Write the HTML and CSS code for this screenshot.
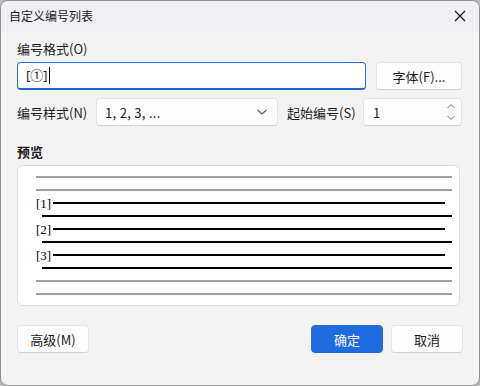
FILE: index.html
```html
<!DOCTYPE html>
<html lang="zh">
<head>
    <meta charset="UTF-8">
    <meta name="viewport" content="width=device-width, initial-scale=1.0">
    <title>自定义编号列表</title>
    <link rel="stylesheet" href="styles.css">
</head>
<body>
    <div class="window">
        <div class="titlebar">
            <span class="title">自定义编号列表</span>
            <span class="close">
                <svg width="12" height="12" viewBox="0 0 12 12"><path d="M1 1 L11 11 M11 1 L1 11" stroke="#1a1a1a" stroke-width="1.2" fill="none"/></svg>
            </span>
        </div>

        <div class="content">
            <div class="label">编号格式(O)</div>
            <div class="row">
                <div class="textbox">[①]<span class="caret"></span></div>
                <button class="btn font-btn">字体(F)...</button>
            </div>

            <div class="row row-style">
                <span class="label-inline style-label">编号样式(N)</span>
                <div class="select">
                    <span>1, 2, 3, ...</span>
                    <svg width="12" height="8" viewBox="0 0 12 8"><path d="M1.5 2 L6 6 L10.5 2" stroke="#5c5c5c" stroke-width="1.1" fill="none"/></svg>
                </div>
                <span class="label-inline start-label">起始编号(S)</span>
                <div class="spin">
                    <span>1</span>
                    <svg width="10" height="18" viewBox="0 0 10 18"><path d="M1.5 5 L5 1.5 L8.5 5 M1.5 13 L5 16.5 L8.5 13" stroke="#6a6a6a" stroke-width="1" fill="none"/></svg>
                </div>
            </div>

            <div class="section-title">预览</div>
            <div class="preview">
                <div class="pline"><div class="bar gray"></div></div>
                <div class="pline"><div class="bar gray"></div></div>
                <div class="pline num"><span class="mark">[1]</span><div class="bar black short"></div></div>
                <div class="pline"><div class="bar black indent"></div></div>
                <div class="pline num"><span class="mark">[2]</span><div class="bar black short"></div></div>
                <div class="pline"><div class="bar black indent"></div></div>
                <div class="pline num"><span class="mark">[3]</span><div class="bar black short"></div></div>
                <div class="pline"><div class="bar black indent"></div></div>
                <div class="pline"><div class="bar gray"></div></div>
                <div class="pline"><div class="bar gray"></div></div>
            </div>

            <div class="footer">
                <button class="btn">高级(M)</button>
                <div class="footer-right">
                    <button class="btn primary">确定</button>
                    <button class="btn">取消</button>
                </div>
            </div>
        </div>
    </div>
</body>
</html>
```

FILE: styles.css
```css
html {
    background: #b9b9b9;
}
body {
    margin: 0;
    font-family: "Noto Sans CJK SC", "Noto Sans", sans-serif;
    font-size: 13px;
    color: #1b1b1b;
}
.window {
    width: 480px;
    height: 386px;
    box-sizing: border-box;
    border: 1px solid #8f8f8f;
    border-radius: 8px;
    background: #f3f3f3;
    overflow: hidden;
    display: flex;
    flex-direction: column;
}
.titlebar {
    height: 30px;
    background: #f0eff4;
    display: flex;
    align-items: center;
    justify-content: space-between;
    padding-left: 8px;
}
.title {
    font-size: 12px;
    line-height: 16px;
}
.close {
    width: 32px;
    height: 30px;
    display: flex;
    align-items: center;
    justify-content: center;
    margin-right: 3px;
}
.content {
    padding: 9px 17px 0 16px;
}
.label {
    line-height: 18px;
    margin-bottom: 4px;
}
.row {
    display: flex;
    height: 28px;
    gap: 10px;
}
.textbox {
    flex: 1;
    box-sizing: border-box;
    background: #fff;
    border: 1px solid #2a6fd6;
    border-bottom: 2px solid #1f62c9;
    border-radius: 4px;
    padding-left: 8px;
    line-height: 25px;
    display: flex;
    align-items: center;
    font-family: "Noto Sans", "Noto Sans CJK SC", sans-serif;
    font-size: 13px;
}
.caret {
    width: 1px;
    height: 17px;
    background: #000;
    margin-left: 1px;
}
.btn {
    box-sizing: border-box;
    height: 28px;
    background: #fdfdfd;
    border: 1px solid #e3e3e3;
    border-bottom-color: #d2d2d2;
    border-radius: 4px;
    font-family: "Noto Sans CJK SC", "Noto Sans", sans-serif;
    font-size: 13px;
    color: #1b1b1b;
    padding: 0;
    width: 72px;
}
.font-btn {
    width: 86px;
}
.row-style {
    margin-top: 8px;
    gap: 9px;
    align-items: center;
}
.label-inline {
    white-space: nowrap;
}
.style-label {
    width: 70px;
}
.start-label {
    width: 67px;
}
.select, .spin {
    box-sizing: border-box;
    height: 28px;
    background: #fdfdfd;
    border: 1px solid #e3e3e3;
    border-bottom-color: #d2d2d2;
    border-radius: 4px;
    display: flex;
    align-items: center;
    justify-content: space-between;
}
.select {
    width: 182px;
    padding: 0 9px 0 8px;
    letter-spacing: 0.3px;
}
.spin {
    flex: 1;
    padding: 0 5px 0 9px;
}
.section-title {
    font-weight: bold;
    line-height: 18px;
    margin-top: 17px;
    margin-bottom: 4px;
}
.preview {
    background: #fff;
    border: 1px solid #dcdcdc;
    border-radius: 6px;
    margin-right: 2px;
    padding: 5px 7px 4px 18px;
}
.pline {
    height: 13px;
    display: flex;
    align-items: flex-start;
}
.bar {
    height: 2px;
    margin-top: 5px;
    flex: 1;
}
.gray {
    background: #a0a0a0;
}
.black {
    background: #000;
}
.indent {
    margin-left: 6px;
}
.short {
    margin-left: 2px;
    margin-right: 7px;
}
.mark {
    font-family: "Liberation Serif", serif;
    font-size: 13px;
    line-height: 13px;
    color: #000;
}
.footer {
    margin-top: 19px;
    display: flex;
    justify-content: space-between;
}
.footer-right {
    display: flex;
    gap: 8px;
    margin-right: -1px;
}
.primary {
    background: #1f6ce0;
    border-color: #1f6ce0;
    color: #fff;
}
```
